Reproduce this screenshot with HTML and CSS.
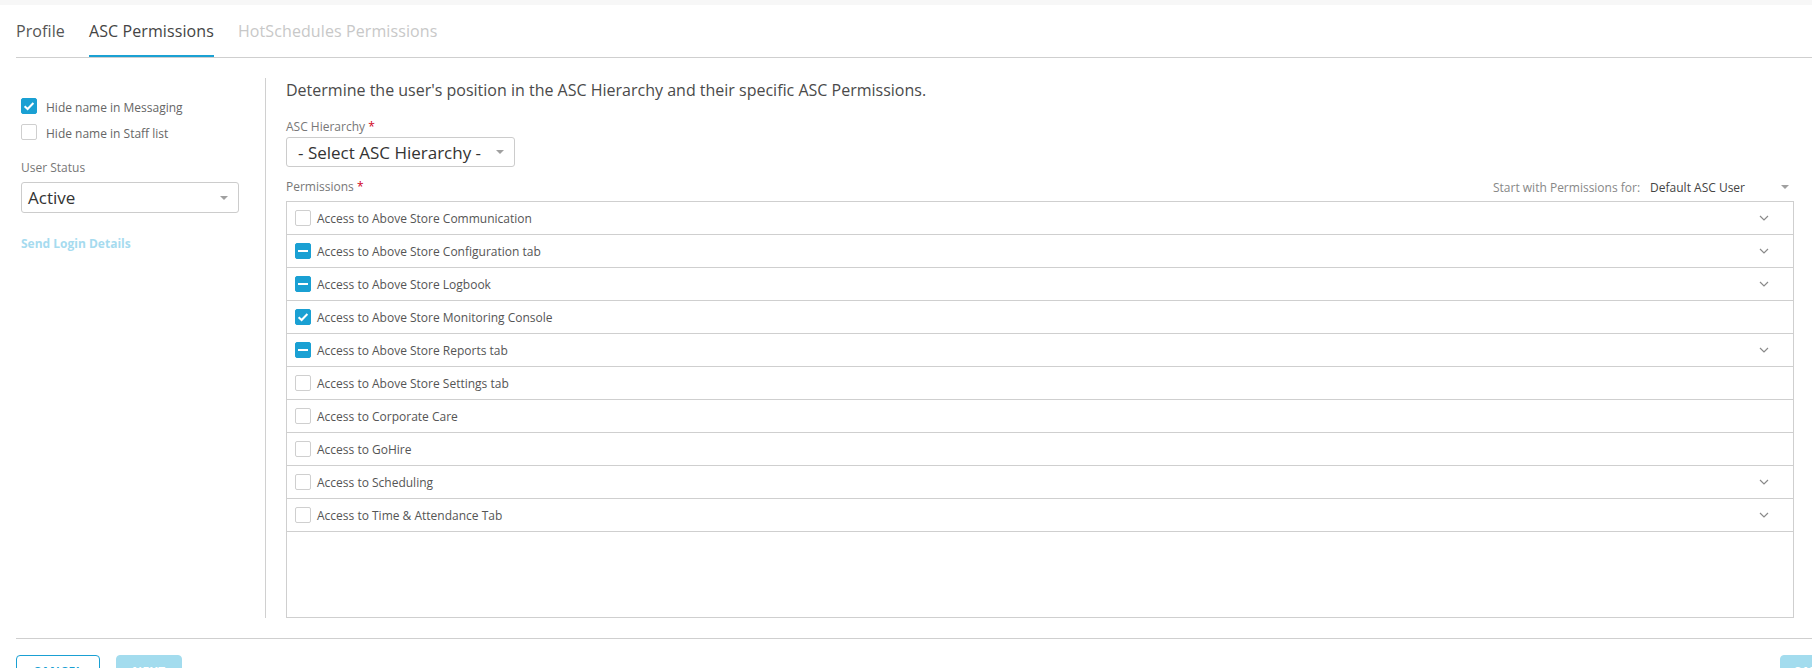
FILE: index.html
```html
<!DOCTYPE html>
<html>
<head>
<meta charset="utf-8">
<link rel="stylesheet" href="styles.css">
</head>
<body>
<div class="topstrip"></div>
<div class="tabs">
  <div class="tab">Profile</div>
  <div class="tab active">ASC Permissions</div>
  <div class="tab disabled">HotSchedules Permissions</div>
</div>
<div class="main">
  <div class="side">
    <div class="cbrow"><span class="cb checked"><svg viewBox="0 0 16 16" width="16" height="16"><path d="M3.6 8.2 L6.6 11 L12.4 5" fill="none" stroke="#fff" stroke-width="2"/></svg></span><span class="cblabel">Hide name in Messaging</span></div>
    <div class="cbrow"><span class="cb"></span><span class="cblabel">Hide name in Staff list</span></div>
    <div class="fieldlabel">User Status</div>
    <div class="select status"><span>Active</span><span class="caret"></span></div>
    <div class="sendlogin">Send Login Details</div>
  </div>
  <div class="content">
    <div class="heading">Determine the user's position in the ASC Hierarchy and their specific ASC Permissions.</div>
    <div class="fieldlabel hier">ASC Hierarchy <span class="req">*</span></div>
    <div class="select hierarchy"><span>- Select ASC Hierarchy -</span><span class="caret"></span></div>
    <div class="permhead">
      <div class="fieldlabel">Permissions <span class="req">*</span></div>
      <div class="startwith"><span class="swlabel">Start with Permissions for:</span><span class="swvalue">Default ASC User</span><span class="caret"></span></div>
    </div>
    <div class="permbox">
      <div class="prow"><span class="cb"></span><span class="plabel">Access to Above Store Communication</span><svg class="chev" viewBox="0 0 10 6" width="10" height="6"><polyline points="1,1 5,5 9,1" fill="none" stroke="#8a8a8a" stroke-width="1.2"/></svg></div>
      <div class="prow"><span class="cb checked"><span class="dash"></span></span><span class="plabel">Access to Above Store Configuration tab</span><svg class="chev" viewBox="0 0 10 6" width="10" height="6"><polyline points="1,1 5,5 9,1" fill="none" stroke="#8a8a8a" stroke-width="1.2"/></svg></div>
      <div class="prow"><span class="cb checked"><span class="dash"></span></span><span class="plabel">Access to Above Store Logbook</span><svg class="chev" viewBox="0 0 10 6" width="10" height="6"><polyline points="1,1 5,5 9,1" fill="none" stroke="#8a8a8a" stroke-width="1.2"/></svg></div>
      <div class="prow"><span class="cb checked"><svg viewBox="0 0 16 16" width="16" height="16"><path d="M3.6 8.2 L6.6 11 L12.4 5" fill="none" stroke="#fff" stroke-width="2"/></svg></span><span class="plabel">Access to Above Store Monitoring Console</span></div>
      <div class="prow"><span class="cb checked"><span class="dash"></span></span><span class="plabel">Access to Above Store Reports tab</span><svg class="chev" viewBox="0 0 10 6" width="10" height="6"><polyline points="1,1 5,5 9,1" fill="none" stroke="#8a8a8a" stroke-width="1.2"/></svg></div>
      <div class="prow"><span class="cb"></span><span class="plabel">Access to Above Store Settings tab</span></div>
      <div class="prow"><span class="cb"></span><span class="plabel">Access to Corporate Care</span></div>
      <div class="prow"><span class="cb"></span><span class="plabel">Access to GoHire</span></div>
      <div class="prow"><span class="cb"></span><span class="plabel">Access to Scheduling</span><svg class="chev" viewBox="0 0 10 6" width="10" height="6"><polyline points="1,1 5,5 9,1" fill="none" stroke="#8a8a8a" stroke-width="1.2"/></svg></div>
      <div class="prow"><span class="cb"></span><span class="plabel">Access to Time &amp; Attendance Tab</span><svg class="chev" viewBox="0 0 10 6" width="10" height="6"><polyline points="1,1 5,5 9,1" fill="none" stroke="#8a8a8a" stroke-width="1.2"/></svg></div>
    </div>
  </div>
</div>
<div class="footer">
  <div class="btns">
    <button class="btn outline">CANCEL</button>
    <button class="btn filled">NEXT</button>
  </div>
  <button class="btn filled save">SAVE</button>
</div>
</body>
</html>
```

FILE: styles.css
```css
* { box-sizing: border-box; }
html, body { margin: 0; padding: 0; }
body {
  width: 1812px;
  height: 668px;
  overflow: hidden;
  background: #fff;
  font-family: "Open Sans", "Noto Sans", sans-serif;
  color: #444;
}
.topstrip { height: 5px; background: #f7f7f7; }
.tabs {
  display: flex;
  gap: 24px;
  margin-left: 16px;
  border-bottom: 1px solid #cfcfcf;
}
.tab {
  font-size: 16px;
  line-height: 22px;
  letter-spacing: 0.1px;
  padding: 15px 0 13px;
  border-bottom: 2px solid transparent;
  color: #555;
}
.tab.active { border-bottom-color: #1ba1d3; color: #444; }
.tab.disabled { color: #c8c8c8; }

.main {
  display: flex;
  padding: 20px 18px 0 16px;
}
.side {
  width: 250px;
  padding: 20px 0 0 5px;
  border-right: 1px solid #d0d0d0;
  flex: none;
}
.cbrow {
  display: flex;
  align-items: center;
  height: 16px;
  margin-bottom: 10px;
}
.cb {
  width: 16px;
  height: 16px;
  border: 1px solid #cfcfcf;
  border-radius: 2px;
  background: #fff;
  flex: none;
  display: flex;
  align-items: center;
  justify-content: center;
}
.cb.checked { background: #1aa0d3; border-color: #1aa0d3; }
.cb svg { display: block; margin: -1px; }
.dash { width: 10px; height: 2px; background: #fff; display: block; }
.cblabel {
  font-size: 12px;
  color: #666;
  margin-left: 9px;
  margin-top: 3px;
}
.fieldlabel {
  font-size: 12px;
  color: #777;
  line-height: 16px;
}
.side .fieldlabel { margin-top: 20px; }
.req { color: #d0021b; }
.select {
  display: flex;
  align-items: center;
  justify-content: space-between;
  border: 1px solid #ccc;
  border-radius: 3px;
  font-size: 17px;
  color: #333;
  padding: 0 10px 0 6px;
}
.caret {
  width: 0;
  height: 0;
  border-left: 4px solid transparent;
  border-right: 4px solid transparent;
  border-top: 4px solid #a0a0a0;
  flex: none;
}
.select.status {
  width: 218px;
  height: 31px;
  margin-top: 6px;
}
.sendlogin {
  margin-top: 22px;
  font-size: 12px;
  font-weight: bold;
  color: #a6dbef;
}

.content {
  flex: 1;
  padding-left: 20px;
  display: flex;
  flex-direction: column;
}
.heading {
  font-size: 16px;
  line-height: 24px;
  color: #4a4a4a;
}
.fieldlabel.hier { margin-top: 17px; }
.select.hierarchy {
  width: 229px;
  height: 30px;
  margin-top: 2px;
  padding-left: 11px;
}
.permhead {
  display: flex;
  justify-content: space-between;
  align-items: center;
  margin-top: 12px;
  height: 16px;
}
.startwith {
  display: flex;
  align-items: center;
  font-size: 12px;
}
.swlabel { color: #888; }
.swvalue { color: #444; margin-left: 10px; }
.startwith .caret { margin-left: 36px; margin-right: 5px; }

.permbox {
  margin-top: 6px;
  border: 1px solid #cfcfcf;
  height: 417px;
}
.prow {
  display: flex;
  align-items: center;
  height: 33px;
  border-bottom: 1px solid #cfcfcf;
  padding-left: 8px;
  padding-right: 24px;
}
.plabel {
  font-size: 12px;
  color: #555;
  margin-left: 6px;
  flex: 1;
}
.chev { flex: none; }

.footer {
  margin: 20px 0 0 16px;
  border-top: 1px solid #cfcfcf;
  padding-top: 16px;
  display: flex;
  justify-content: space-between;
}
.btns { display: flex; gap: 16px; }
.btn {
  font-family: "Open Sans", "Noto Sans", sans-serif;
  font-size: 12px;
  font-weight: bold;
  height: 32px;
  border-radius: 4px;
  padding: 0;
  letter-spacing: 0.5px;
}
.btn.outline {
  width: 84px;
  background: #fff;
  color: #1aa0d3;
  border: 1px solid #1aa0d3;
}
.btn.filled {
  width: 66px;
  background: #a3dcee;
  color: #fff;
  border: 1px solid #a3dcee;
}
.btn.save { width: 60px; margin-right: -28px; }
```
